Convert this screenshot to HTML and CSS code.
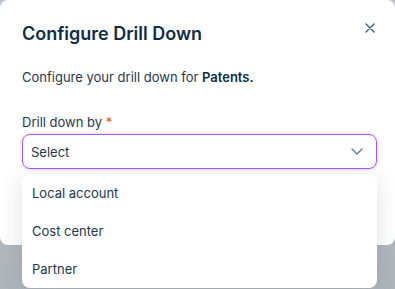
FILE: index.html
```html
<!DOCTYPE html>
<html lang="en">
<head>
    <meta charset="UTF-8">
    <title>Configure Drill Down</title>
    <link rel="stylesheet" href="styles.css">
</head>
<body>
<div class="modal">
    <div class="modal-header">
        <h2>Configure Drill Down</h2>
        <button class="close" type="button" aria-label="Close">
            <svg width="10" height="10" viewBox="0 0 10 10"><path d="M1 1L9 9M9 1L1 9" stroke="#3a5872" stroke-width="1.3" stroke-linecap="round"/></svg>
        </button>
    </div>
    <p class="intro">Configure your drill down for <strong>Patents.</strong></p>

    <div class="field">
        <label for="drill">Drill down by <span class="required">*</span></label>
        <div class="select-wrap">
            <div class="select" id="drill">
                <span>Select</span>
                <svg width="12" height="7" viewBox="0 0 12 7"><path d="M1 1L6 6L11 1" fill="none" stroke="#5b7389" stroke-width="1.2" stroke-linecap="round" stroke-linejoin="round"/></svg>
            </div>
            <ul class="menu">
                <li>Local account</li>
                <li>Cost center</li>
                <li>Partner</li>
            </ul>
        </div>
    </div>
</div>
</body>
</html>
```
FILE: styles.css
```css
body {
    margin: 0;
    height: 289px;
    overflow: hidden;
    font-family: Inter, "Noto Sans", sans-serif;
    background: linear-gradient(#bcc3c8, #aeb6bb);
    color: #1f3850;
}
.modal {
    background-color: white;
    height: 245px;
    box-sizing: border-box;
    padding: 20px 18px 20px 22px;
    border-radius: 8px;
}
.modal-header {
    display: flex;
    justify-content: space-between;
    align-items: flex-start;
}
h2 {
    margin: 0;
    font-size: 18px;
    line-height: 28px;
    font-weight: 600;
    color: #0f2d48;
}
.close {
    border: none;
    background: none;
    padding: 0;
    margin: 3px 2px 0 0;
    width: 10px;
    height: 10px;
    display: flex;
}
.intro {
    margin: 19px 0 0;
    font-size: 13px;
    line-height: 20px;
}
.intro strong {
    font-weight: 600;
    color: #0f2d48;
}
.field {
    margin-top: 25px;
}
label {
    display: block;
    font-size: 13px;
    line-height: 20px;
    margin-bottom: 2px;
}
.required {
    color: #e5533d;
}
.select-wrap {
    position: relative;
}
.select {
    height: 35px;
    box-sizing: border-box;
    border: 1.5px solid #a35cf0;
    border-radius: 8px;
    box-shadow: 0 0 0 2px rgba(163, 92, 240, 0.12);
    display: flex;
    align-items: center;
    justify-content: space-between;
    padding: 0 13px 0 8px;
    font-size: 13px;
    color: #1d3750;
}
.menu {
    position: absolute;
    left: 0;
    right: 0;
    top: 40px;
    margin: 0;
    padding: 0;
    list-style: none;
    background-color: white;
    border-radius: 8px;
    box-shadow: 0 4px 24px rgba(30, 45, 60, 0.14);
}
.menu li {
    padding: 9px 10px;
    font-size: 13px;
    line-height: 20px;
    color: #22394f;
}
```
